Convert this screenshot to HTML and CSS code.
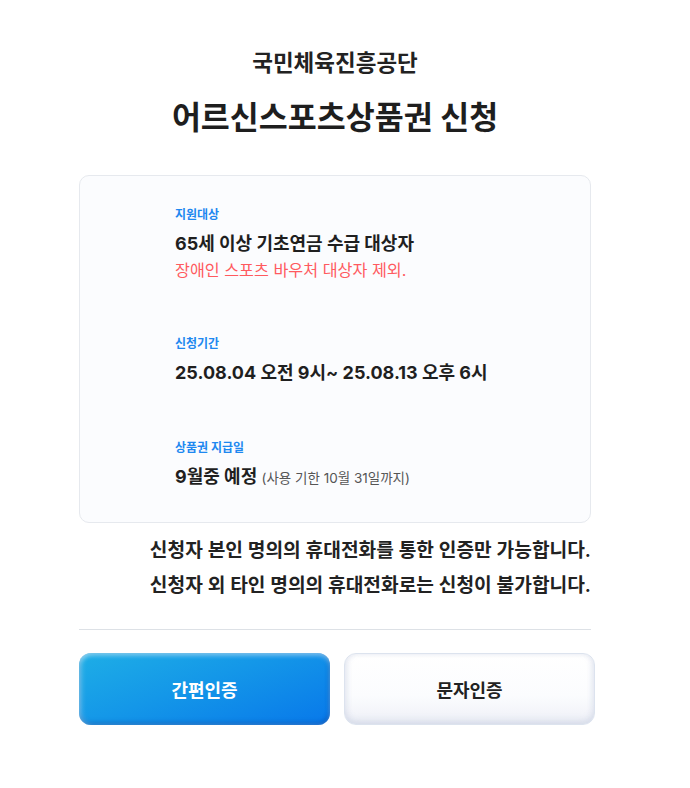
FILE: index.html
```html
<!DOCTYPE html>
<html lang="ko">
<head>
<meta charset="utf-8">
<title>어르신스포츠상품권 신청</title>
<link rel="stylesheet" href="styles.css">
</head>
<body>
<main class="page">
  <header class="head">
    <p class="org">국민체육진흥공단</p>
    <h1 class="title">어르신스포츠상품권 신청</h1>
  </header>

  <section class="card">
    <div class="item">
      <p class="label">지원대상</p>
      <p class="value">65세 이상 기초연금 수급 대상자</p>
      <p class="warn">장애인 스포츠 바우처 대상자 제외.</p>
    </div>
    <div class="item">
      <p class="label">신청기간</p>
      <p class="value">25.08.04 오전 9시~ 25.08.13 오후 6시</p>
    </div>
    <div class="item">
      <p class="label">상품권 지급일</p>
      <p class="value">9월중 예정 <span class="sub">(사용 기한 10월 31일까지)</span></p>
    </div>
  </section>

  <div class="notice">
    <p>신청자 본인 명의의 휴대전화를 통한 인증만 가능합니다.</p>
    <p>신청자 외 타인 명의의 휴대전화로는 신청이 불가합니다.</p>
  </div>

  <hr class="divider">

  <div class="actions">
    <button class="btn btn-primary" type="button">간편인증</button>
    <button class="btn btn-secondary" type="button">문자인증</button>
  </div>
</main>
</body>
</html>
```

FILE: styles.css
```css
* { box-sizing: border-box; }

html, body {
  margin: 0;
  padding: 0;
  background: #ffffff;
}

body {
  font-family: "Inter", "Noto Sans CJK KR", "Noto Sans", sans-serif;
  color: #222222;
}

p { margin: 0; }

.page {
  width: 512px;
  margin-left: 79px;
  padding-top: 49px;
}

.head {
  text-align: center;
}

.org {
  font-size: 22.5px;
  line-height: 28px;
  font-weight: 700;
  color: #222;
}

.title {
  margin: 21px 0 0;
  font-size: 31.5px;
  line-height: 40px;
  font-weight: 700;
  color: #1e1e1e;
}

.card {
  margin-top: 37px;
  background: #fbfcfe;
  border: 1px solid #e6e9ee;
  border-radius: 10px;
  padding: 30px 0 32px 95px;
  display: flex;
  flex-direction: column;
  gap: 54px;
}

.label {
  font-size: 12px;
  line-height: 17px;
  font-weight: 700;
  color: #1e88f0;
  margin-bottom: 9px;
}

.value {
  font-size: 18px;
  line-height: 24px;
  font-weight: 700;
  color: #1f1f1f;
}

.warn {
  margin-top: 3px;
  font-size: 16.2px;
  line-height: 22px;
  font-weight: 400;
  color: #ff5a5f;
}

.sub {
  font-size: 13.5px;
  font-weight: 400;
  color: #555;
}

.notice {
  margin-top: 10px;
  text-align: right;
  font-size: 19.2px;
  line-height: 35px;
  font-weight: 600;
  color: #222;
}

.divider {
  margin: 26px 0 0;
  border: 0;
  border-top: 1px solid #dde1e6;
  height: 0;
}

.actions {
  margin-top: 23px;
  width: 516px;
  display: grid;
  grid-template-columns: 251px 251px;
  gap: 14px;
}

.btn {
  height: 72px;
  border-radius: 12px;
  font-family: inherit;
  font-size: 18px;
  font-weight: 700;
  cursor: pointer;
}

.btn-primary {
  border: 0;
  color: #ffffff;
  background: linear-gradient(160deg, #1eaee6 0%, #1497e8 45%, #0878ea 100%);
  box-shadow:
    inset 0 3px 4px rgba(255, 255, 255, 0.35),
    inset 3px 0 5px rgba(255, 255, 255, 0.25),
    inset 0 -3px 4px rgba(0, 60, 150, 0.35),
    inset -2px 0 4px rgba(0, 60, 150, 0.2);
}

.btn-secondary {
  border: 1px solid #dce3ee;
  color: #222;
  background: linear-gradient(180deg, #ffffff 0%, #fbfcfe 60%, #eef0f7 100%);
  box-shadow:
    inset 0 -4px 6px rgba(200, 206, 225, 0.45),
    inset 3px 0 5px rgba(220, 225, 238, 0.4),
    inset -3px 0 5px rgba(220, 225, 238, 0.4);
}
```
